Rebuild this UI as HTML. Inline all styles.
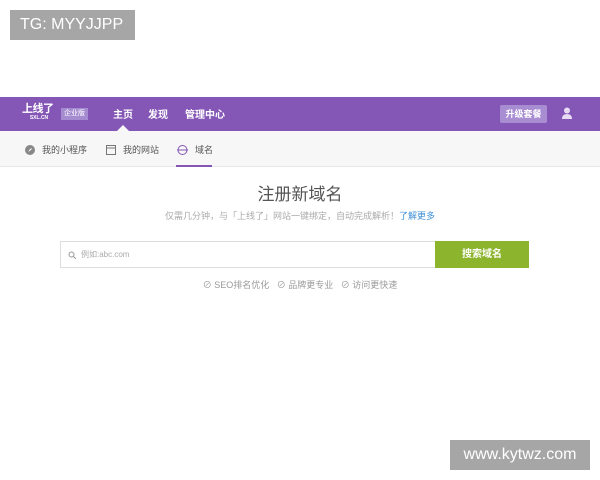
<!DOCTYPE html>
<html><head><meta charset="utf-8"><style>
*{margin:0;padding:0;box-sizing:border-box}
body{width:600px;height:480px;background:#fff;position:relative;overflow:hidden;font-family:"Liberation Sans","Noto Sans CJK SC",sans-serif}
.tg{position:absolute;left:10px;top:10px;width:125px;height:30px;background:#a6a6a6;color:#fff;font-size:16px;line-height:30px;padding-left:10px}
.wm{position:absolute;left:450px;top:440px;width:140px;height:30px;background:#a6a6a6;color:#fff;font-size:16px;line-height:30px;text-align:center}
.nav{position:absolute;left:0;top:97px;width:600px;height:34px;background:#8456b6;color:#fff}
.logo{position:absolute;left:22px;top:6px;width:34px;font-size:11px;font-weight:bold;line-height:12px;letter-spacing:-0.5px}
.logo small{display:block;font-size:5px;text-align:center;line-height:6px;letter-spacing:0}
.ent{position:absolute;left:61px;top:11px;background:#a58cd0;font-size:7px;padding:1px 3px;line-height:10px}
.nav a{position:absolute;top:9px;font-size:10px;font-weight:bold}
.tri{position:absolute;left:117px;top:28px;width:0;height:0;border:6px solid transparent;border-bottom-color:#f7f7f7;border-top:0}
.up{position:absolute;left:500px;top:8px;width:47px;height:18px;background:#a98dd3;border-radius:2px;font-size:9px;font-weight:bold;text-align:center;line-height:18px}
.sub{position:absolute;left:0;top:131px;width:600px;height:36px;background:#f7f7f7;border-bottom:1px solid #e8e8e8;font-size:9px;color:#555}
.sub span{position:absolute;top:12px}
.ul{position:absolute;left:176px;top:34px;width:36px;height:2px;background:#8456b6}
h1{position:absolute;top:180px;width:600px;text-align:center;font-size:17px;font-weight:normal;color:#555}
.desc{position:absolute;top:209px;width:600px;text-align:center;font-size:9px;color:#aaa}
.desc b{color:#3d8fd6;font-weight:normal}
.inp{position:absolute;left:60px;top:241px;width:376px;height:27px;border:1px solid #ddd;font-size:8px;color:#aaa;line-height:25px;padding-left:20px}
.btn{position:absolute;left:435px;top:241px;width:94px;height:27px;background:#8cb42d;color:#fff;font-size:10px;font-weight:bold;text-align:center;line-height:27px}
.feat{position:absolute;top:278px;width:600px;text-align:center;font-size:9px;color:#999}
</style></head><body>
<div class="tg">TG: MYYJJPP</div>
<div class="nav">
<div class="logo">上线了<small>SXL.CN</small></div>
<div class="ent">企业版</div>
<a style="left:113px">主页</a><a style="left:148px">发现</a><a style="left:185px">管理中心</a>
<div class="tri"></div>
<div class="up">升级套餐</div>
<svg style="position:absolute;left:561px;top:10px" width="12" height="12" viewBox="0 0 12 12"><circle cx="6" cy="3.5" r="3" fill="#e8dcf5"/><path d="M1 12 Q1 7 6 7 Q11 7 11 12Z" fill="#e8dcf5"/></svg>
</div>
<div class="sub">
<svg style="position:absolute;left:25px;top:14px" width="10" height="10"><circle cx="5" cy="5" r="5" fill="#888"/><path d="M3 7 L5 4 L7 3 L6 5Z" fill="#fff"/></svg>
<span style="left:42px">我的小程序</span>
<svg style="position:absolute;left:106px;top:14px" width="10" height="10"><rect x="0.5" y="0.5" width="9" height="9" fill="none" stroke="#777"/><line x1="0" y1="3" x2="10" y2="3" stroke="#777"/></svg>
<span style="left:123px">我的网站</span>
<svg style="position:absolute;left:177px;top:14px" width="11" height="10"><path d="M1 5 A4.5 4.5 0 0 1 10 5 M1 5 A4.5 4.5 0 0 0 10 5" fill="none" stroke="#8456b6"/><line x1="0" y1="5" x2="11" y2="5" stroke="#8456b6"/></svg>
<span style="left:195px">域名</span>
<div class="ul"></div>
</div>
<h1>注册新域名</h1>
<div class="desc">仅需几分钟，与「上线了」网站一键绑定，自动完成解析！<b>了解更多</b></div>
<div class="inp"><svg style="position:absolute;left:7px;top:9px" width="8" height="8"><circle cx="3.5" cy="3.5" r="2.5" fill="none" stroke="#999"/><line x1="5.5" y1="5.5" x2="8" y2="8" stroke="#999"/></svg>例如:abc.com</div>
<div class="btn">搜索域名</div>
<div class="feat">⊘ SEO排名优化 &nbsp; ⊘ 品牌更专业 &nbsp; ⊘ 访问更快速</div>
<div class="wm">www.kytwz.com</div>
</body></html>
